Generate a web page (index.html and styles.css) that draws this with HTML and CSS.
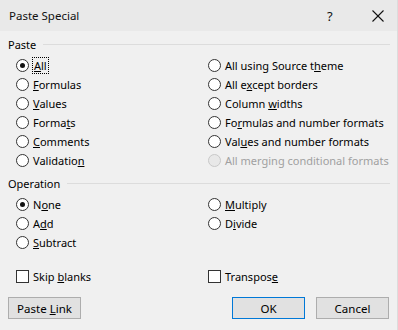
FILE: index.html
```html
<!DOCTYPE html>
<html lang="en">
<head>
    <meta charset="UTF-8">
    <title>Paste Special</title>
    <link rel="stylesheet" href="styles.css">
</head>
<body>
    <div class="dialog">
        <div class="titlebar">
            <span class="title">Paste Special</span>
            <span class="help">?</span>
            <span class="close">
                <svg width="12" height="12" viewBox="0 0 12 12" fill="none" stroke="#111" stroke-width="1.1">
                    <line x1="0.5" y1="0.5" x2="11.5" y2="11.5"></line>
                    <line x1="11.5" y1="0.5" x2="0.5" y2="11.5"></line>
                </svg>
            </span>
        </div>

        <div class="body">
            <div class="group-label">Paste</div>
            <div class="options paste-options">
                <label class="radio checked"><span class="dot"></span><span class="focus"><u>A</u>ll</span></label>
                <label class="radio"><span class="dot"></span><span>All using Source t<u>h</u>eme</span></label>
                <label class="radio"><span class="dot"></span><span><u>F</u>ormulas</span></label>
                <label class="radio"><span class="dot"></span><span>All e<u>x</u>cept borders</span></label>
                <label class="radio"><span class="dot"></span><span><u>V</u>alues</span></label>
                <label class="radio"><span class="dot"></span><span>Column <u>w</u>idths</span></label>
                <label class="radio"><span class="dot"></span><span>Forma<u>t</u>s</span></label>
                <label class="radio"><span class="dot"></span><span>Fo<u>r</u>mulas and number formats</span></label>
                <label class="radio"><span class="dot"></span><span><u>C</u>omments</span></label>
                <label class="radio"><span class="dot"></span><span>Val<u>u</u>es and number formats</span></label>
                <label class="radio"><span class="dot"></span><span>Validatio<u>n</u></span></label>
                <label class="radio disabled"><span class="dot"></span><span>All merging conditional formats</span></label>
            </div>

            <div class="group-label">Operation</div>
            <div class="options op-options">
                <label class="radio checked"><span class="dot"></span><span>N<u>o</u>ne</span></label>
                <label class="radio"><span class="dot"></span><span><u>M</u>ultiply</span></label>
                <label class="radio"><span class="dot"></span><span>A<u>d</u>d</span></label>
                <label class="radio"><span class="dot"></span><span>D<u>i</u>vide</span></label>
                <label class="radio"><span class="dot"></span><span><u>S</u>ubtract</span></label>
            </div>

            <div class="options checks">
                <label class="check"><span class="box"></span><span>Skip <u>b</u>lanks</span></label>
                <label class="check"><span class="box"></span><span>Transpos<u>e</u></span></label>
            </div>

            <div class="buttons">
                <button class="btn">Paste <u>L</u>ink</button>
                <span class="spacer"></span>
                <button class="btn default">OK</button>
                <button class="btn">Cancel</button>
            </div>
        </div>
    </div>
</body>
</html>
```

FILE: styles.css
```css
body {
    margin: 0;
    font-family: "Noto Sans", "Open Sans", sans-serif;
    font-size: 11px;
    color: #000;
    background-color: #f0f0f0;
}

.dialog {
    width: 398px;
    height: 330px;
    background-color: #f0f0f0;
    box-sizing: border-box;
    border-right: 1px solid #dcdcdc;
    overflow: hidden;
}

.titlebar {
    height: 31px;
    background-color: #e9e9e9;
    display: flex;
    align-items: center;
    padding-left: 9px;
    font-size: 11.5px;
    color: #111;
}

.title {
    flex: 1;
}

.help {
    width: 12px;
    margin-right: 33px;
    font-size: 13px;
}

.close {
    width: 12px;
    margin-right: 13px;
    display: flex;
}

.body {
    padding: 5px 7px 0 8px;
}

.group-label {
    display: flex;
    align-items: center;
    height: 17px;
}

.group-label::after {
    content: "";
    flex: 1;
    height: 1px;
    margin-left: 7px;
    background-color: #dcdcdc;
}

.options {
    display: grid;
    grid-template-columns: 192px 1fr;
    grid-auto-rows: 19px;
    padding-left: 8px;
}

.paste-options {
    margin-top: 3px;
    margin-bottom: 5px;
}

.op-options {
    margin-top: 3px;
    margin-bottom: 15px;
}

.radio,
.check {
    display: flex;
    align-items: center;
    white-space: nowrap;
}

.radio .dot {
    width: 11px;
    height: 11px;
    border: 1px solid #333;
    border-radius: 50%;
    background-color: #fff;
    margin-right: 4px;
    position: relative;
    flex: none;
}

.radio.checked .dot::after {
    content: "";
    position: absolute;
    left: 3px;
    top: 3px;
    width: 5px;
    height: 5px;
    border-radius: 50%;
    background-color: #111;
}

.radio.disabled {
    color: #a0a0a0;
}

.radio.disabled .dot {
    border-color: #c8c8c8;
    background-color: #e8e8e8;
}

.focus {
    outline: 1px dotted #000;
    outline-offset: 0;
    padding: 0 1px;
    line-height: 15px;
}

.check .box {
    width: 11px;
    height: 11px;
    border: 1px solid #333;
    background-color: #fff;
    margin-right: 4px;
    flex: none;
}

.buttons {
    display: flex;
    gap: 11px;
    margin-top: 11px;
    padding-right: 1px;
}

.spacer {
    flex: 1;
}

.btn {
    width: 73px;
    height: 22px;
    font-family: inherit;
    font-size: 11.5px;
    background-color: #e1e1e1;
    border: 1px solid #adadad;
    padding: 0;
    color: #000;
}

.btn.default {
    border-color: #0078d7;
}
```
